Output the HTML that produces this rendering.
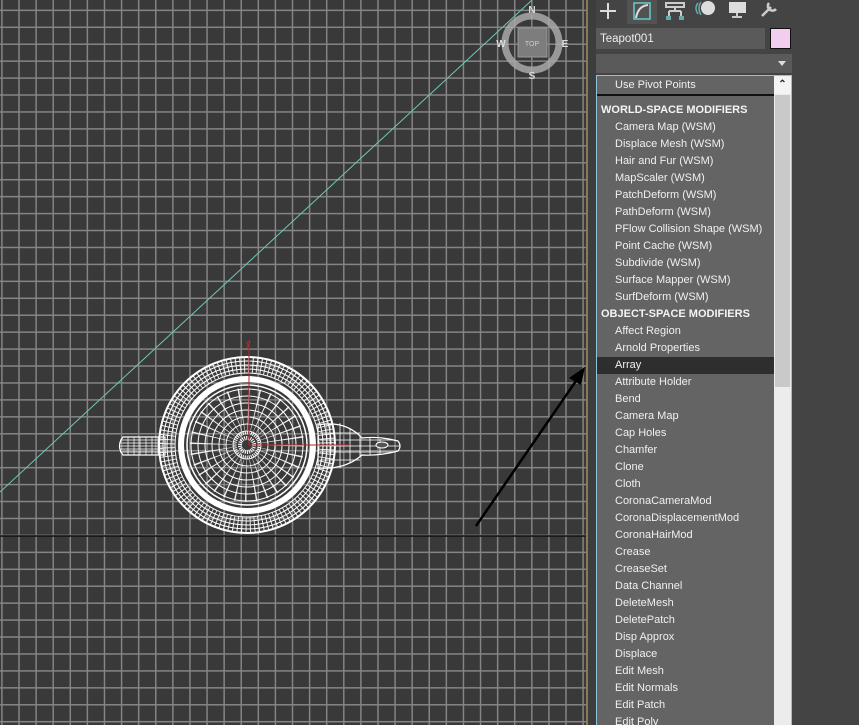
<!DOCTYPE html>
<html><head><style>
*{margin:0;padding:0;box-sizing:border-box}
html,body{width:859px;height:725px;overflow:hidden}
body{background:#444;position:relative;font-family:"Liberation Sans",sans-serif}
#vp{position:absolute;left:0;top:0;width:586px;height:725px;background-color:#393939;
background-image:linear-gradient(to right,#858585 1.6px,transparent 1.6px),linear-gradient(to bottom,#858585 1.6px,transparent 1.6px);
background-size:17.1px 16.95px;background-position:1.2px 9.6px}
#bord{position:absolute;left:586px;top:0;width:2px;height:725px;background:#8b7b52}
#gap{position:absolute;left:588px;top:0;width:8px;height:725px;background:#3d3d3d}
.abs{position:absolute}
#list{position:absolute;left:596px;top:75px;width:196px;height:650px;border:1px solid #8fc3e0;border-bottom:none;background:#646464;overflow:hidden}
.r{height:17px;line-height:17px;font-size:11px;color:#f0f0f0;padding-left:18px;white-space:nowrap;width:177px}
.h{font-weight:bold;padding-left:4px;color:#f4f4f4}
#sb{position:absolute;left:177px;top:0;width:17px;height:660px;background:#ececec}
</style></head><body>
<div id="vp"></div>
<svg class="abs" style="left:0;top:0" width="586" height="725">
<line x1="0" y1="536" x2="586" y2="536" stroke="#111" stroke-width="1.5"/>
<line x1="0" y1="492" x2="532" y2="0" stroke="#6fc7b6" stroke-width="1"/>
<circle cx="532" cy="43" r="27" fill="none" stroke="#a9a9a9" stroke-width="7" opacity="0.85"/>
<rect x="518" y="28" width="29" height="29" fill="#7d7d7d" stroke="#999"/>
<text x="532" y="46" font-size="7" fill="#ccc" text-anchor="middle" font-family="Liberation Sans">TOP</text>
<text x="532" y="13" font-size="10" fill="#ddd" font-weight="bold" text-anchor="middle" font-family="Liberation Sans">N</text>
<text x="532" y="79" font-size="10" fill="#ddd" font-weight="bold" text-anchor="middle" font-family="Liberation Sans">S</text>
<text x="501" y="47" font-size="10" fill="#ddd" font-weight="bold" text-anchor="middle" font-family="Liberation Sans">W</text>
<text x="565" y="47" font-size="10" fill="#ddd" font-weight="bold" text-anchor="middle" font-family="Liberation Sans">E</text>
<g fill="none" stroke="#fff">
<path d="M123 437 H165 V455 H123 Q116 446 123 437Z" stroke-width="1.2"/>
<path d="M120 440H163M120 443H163M120 446H163M120 449H163M120 452H163" stroke-width="0.7"/>
<path d="M128 437V455M134 437V455M140 437V455M146 437V455M152 437V455M158 437V455" stroke-width="0.7"/>
<path d="M318 425 Q345 420 362 438 Q380 436 398 441 Q402 446 398 451 Q380 456 362 455 Q345 470 318 468Z" stroke-width="1.2"/>
<path d="M320 433H360M320 440H395M320 446H400M320 452H395M320 460H360" stroke-width="0.8"/>
<path d="M330 424V469M340 423V468M350 428V463M360 436V456M370 438V455M380 439V454" stroke-width="0.8"/>
<ellipse cx="382" cy="445" rx="6" ry="3" fill="#555" stroke-width="1"/>
<circle cx="247" cy="445" r="88" stroke-width="2"/>
<circle cx="247" cy="445" r="84" stroke-width="1"/>
<circle cx="247" cy="445" r="80" stroke-width="1"/>
<circle cx="247" cy="445" r="76" stroke-width="1"/>
<circle cx="247" cy="445" r="72" stroke-width="1"/>
<circle cx="247" cy="445" r="66" stroke-width="6"/>
<circle cx="247" cy="445" r="60" stroke-width="1.5"/>
<circle cx="247" cy="445" r="80" stroke-width="16" stroke-dasharray="1 3.2" opacity="0.9"/>
<circle cx="247" cy="445" r="56" stroke-width="1"/>
<circle cx="247" cy="445" r="49" stroke-width="1"/>
<circle cx="247" cy="445" r="42" stroke-width="1"/>
<circle cx="247" cy="445" r="35" stroke-width="1"/>
<circle cx="247" cy="445" r="28" stroke-width="1"/>
<circle cx="247" cy="445" r="21" stroke-width="1"/>
<circle cx="247" cy="445" r="14" stroke-width="1"/>
<circle cx="247" cy="445" r="36" stroke-width="42" stroke-dasharray="1 6.1" opacity="0.9"/>
<circle cx="247" cy="445" r="12" stroke-width="3" stroke-dasharray="1 1"/>
<circle cx="247" cy="445" r="7" stroke-width="4" stroke-dasharray="1 1"/>
</g>
<path d="M249 340V445H350" stroke="#c02020" stroke-width="1" fill="none"/>
<text x="246" y="346" font-size="9" fill="#c03030" font-family="Liberation Sans">y</text>
<line x1="476" y1="526" x2="578" y2="378" stroke="#000" stroke-width="2.5"/>
<path d="M585 367 L569 378 L581 385Z" fill="#000"/>
</svg>
<div id="bord"></div><div id="gap"></div>
<div class="abs" style="left:627px;top:0;width:30px;height:24px;background:#525252"></div>
<svg class="abs" style="left:590px;top:0" width="200" height="24">
<path d="M18 3V19M10 11H26" stroke="#ddd" stroke-width="2"/>
<rect x="44" y="3" width="16" height="16" fill="none" stroke="#6cc" stroke-width="1.5"/>
<path d="M46 18 Q48 6 58 5" stroke="#ddd" stroke-width="2" fill="none"/>
<path d="M76 3H94V7H76ZM85 7V11M79 11H91M79 11V17M91 11V17" stroke="#ccc" stroke-width="2" fill="none"/>
<rect x="76" y="16" width="5" height="4" fill="#6aa"/><rect x="89" y="16" width="5" height="4" fill="#6aa"/>
<circle cx="118" cy="8" r="7" fill="#ddd"/><path d="M108 3Q104 8 108 14M111 2Q107 8 111 15" stroke="#6aa" fill="none" stroke-width="1.5"/>
<rect x="139" y="2" width="17" height="11" fill="#ddd"/><path d="M147 13V17M142 17H152" stroke="#ccc" stroke-width="2"/>
<path d="M172 16L181 7M179 3A4 4 0 1 0 186 9" stroke="#ccc" stroke-width="2.5" fill="none"/>
</svg>
<div class="abs" style="left:596px;top:28px;width:169px;height:21px;background:#5a5a5a;color:#eee;font-size:11.5px;line-height:22px;padding-left:4px">Teapot001</div>
<div class="abs" style="left:770px;top:28px;width:21px;height:21px;background:#f1cdee;border:1px solid #111"></div>
<div class="abs" style="left:596px;top:54px;width:196px;height:19px;background:#5a5a5a"></div>
<div class="abs" style="left:778px;top:61px;width:0;height:0;border-left:4px solid transparent;border-right:4px solid transparent;border-top:5px solid #ddd"></div>
<div id="list">
<div class="r" style="line-height:18px;height:18px">Use Pivot Points</div>
<div style="height:2px;background:#111;width:177px"></div>
<div style="height:6px"></div>
<div class="r h">WORLD-SPACE MODIFIERS</div>
<div class="r">Camera Map (WSM)</div>
<div class="r">Displace Mesh (WSM)</div>
<div class="r">Hair and Fur (WSM)</div>
<div class="r">MapScaler (WSM)</div>
<div class="r">PatchDeform (WSM)</div>
<div class="r">PathDeform (WSM)</div>
<div class="r">PFlow Collision Shape (WSM)</div>
<div class="r">Point Cache (WSM)</div>
<div class="r">Subdivide (WSM)</div>
<div class="r">Surface Mapper (WSM)</div>
<div class="r">SurfDeform (WSM)</div>
<div class="r h">OBJECT-SPACE MODIFIERS</div>
<div class="r">Affect Region</div>
<div class="r">Arnold Properties</div>
<div class="r" style="background:#2e2e2e">Array</div>
<div class="r">Attribute Holder</div>
<div class="r">Bend</div>
<div class="r">Camera Map</div>
<div class="r">Cap Holes</div>
<div class="r">Chamfer</div>
<div class="r">Clone</div>
<div class="r">Cloth</div>
<div class="r">CoronaCameraMod</div>
<div class="r">CoronaDisplacementMod</div>
<div class="r">CoronaHairMod</div>
<div class="r">Crease</div>
<div class="r">CreaseSet</div>
<div class="r">Data Channel</div>
<div class="r">DeleteMesh</div>
<div class="r">DeletePatch</div>
<div class="r">Disp Approx</div>
<div class="r">Displace</div>
<div class="r">Edit Mesh</div>
<div class="r">Edit Normals</div>
<div class="r">Edit Patch</div>
<div class="r">Edit Poly</div>
<div id="sb">
<div style="height:18px;background:#f4f4f4;text-align:center;font-size:10px;line-height:18px;color:#222;font-weight:bold">&#8963;</div>
<div style="position:absolute;left:1px;top:19px;width:15px;height:292px;background:#c9c9c9"></div>
</div>
</div>
</body></html>
